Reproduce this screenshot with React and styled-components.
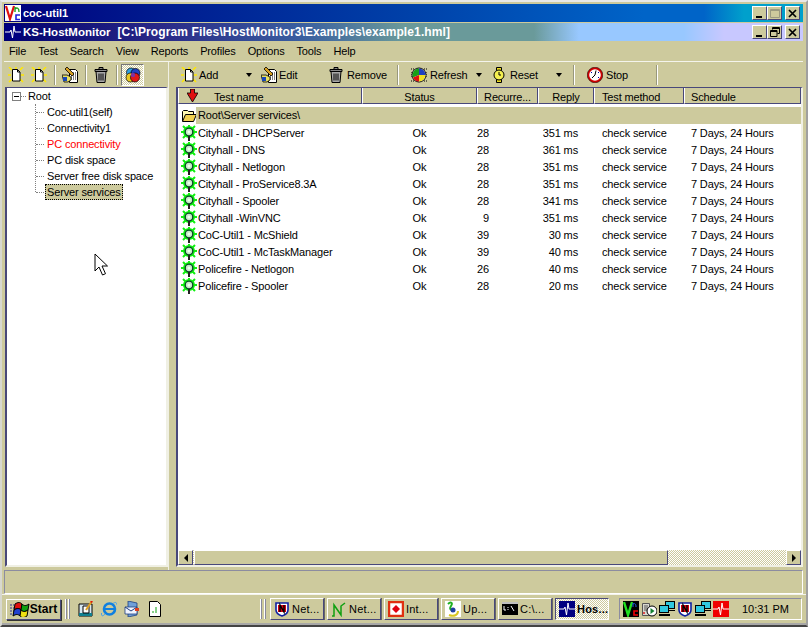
import React from "react";
import styled, { createGlobalStyle, css } from "styled-components";

const BG = "#cdca9d";
const DK = "#48487a";
const LT = "#fff";
const raised = css`
  border-top: 1px solid ${LT};
  border-left: 1px solid ${LT};
  border-right: 1px solid ${DK};
  border-bottom: 1px solid ${DK};
`;
const dither = `repeating-conic-gradient(${BG} 0 25%, #fff 0 50%) 0 0 / 2px 2px`;

const Global = createGlobalStyle`
  html, body { margin: 0; padding: 0; background: ${BG}; }
  body { font: 11px "Liberation Sans", Arial, sans-serif; color: #000; letter-spacing: -.15px; }
  #root { width: 808px; height: 627px; overflow: hidden; }
`;

const Screen = styled.div`
  width: 808px; height: 627px; box-sizing: border-box; display: flex; flex-direction: column;
  border-top: 2px solid #e8e8e8; border-left: 2px solid #d8d8d0; border-right: 2px solid #a0a0a0; border-bottom: 2px solid #444;
  padding: 2px 3px 0 2px; background: ${BG}; overflow: hidden;
`;
const TitleBar = styled.div`
  height: 18px; flex: none; display: flex; align-items: center; padding: 0 3px 0 1px;
  background: ${p => p.$bg}; color: #fff; font: bold ${p => p.$fs}px "Liberation Sans", Arial, sans-serif;
  letter-spacing: 0; gap: 2px; margin-bottom: ${p => p.$mb || 0}px; white-space: pre;
`;
const TitleName = styled.span`font-size: 11.5px; margin-right: 5px;`;
const TitlePath = styled.span`letter-spacing: .11px;`;
const Spacer = styled.div`flex: 1;`;
const WinButtons = styled.div`display: flex; align-items: center;`;
const WinBtn = styled.div`
  width: 15px; height: 14px; box-sizing: border-box; background: ${BG}; ${raised}; margin-left: ${p => p.$gap || 0}px;
  display: flex; align-items: center; justify-content: center; color: ${p => p.$off ? "#9a9a80" : "#000"};
`;
const MenuBar = styled.div`
  height: 21px; flex: none; box-sizing: border-box; display: flex; align-items: center; padding-left: 5px; gap: 12px;
  border-bottom: 1px solid #f4f4ec;
`;
const Main = styled.div`height: 508px; flex: none; display: flex;`;
const LeftPane = styled.div`width: 165px; flex: none; display: flex; flex-direction: column; border-right: 1px solid #f0f0e4; box-sizing: border-box;`;
const RightPane = styled.div`flex: 1; margin-left: 6px; min-width: 0; display: flex; flex-direction: column;`;
const Toolbar = styled.div`
  height: 25px; flex: none; display: flex; align-items: center; box-sizing: border-box; padding-left: ${p => p.$pl || 0}px;
`;
const Tool = styled.div`
  width: ${p => p.$w}px; flex: none; display: flex; align-items: center; height: 22px; gap: ${p => p.$gap ?? 2}px;
  padding-left: ${p => p.$pl || 0}px; margin-left: ${p => p.$ml || 0}px; box-sizing: border-box;
  ${p => p.$on && css`background: ${dither}; border: 1px solid; border-color: #777 #fff #fff #777; justify-content: center;`}
`;
const Sep = styled.div`
  width: 0; height: 20px; flex: none; border-left: 1px solid #98987c; border-right: 1px solid #fff;
  margin-left: ${p => p.$ml || 0}px;
`;
const Caret = styled.div`
  width: 0; height: 0; flex: none; border: 3px solid transparent; border-top: 4px solid #000; border-bottom: 0;
`;
const TreeBox = styled.div`
  flex: 1; background: #fff; margin: 0 0 3px 1px; border: solid; border-width: 1px 2px 2px 2px; border-color: ${DK} #f0f0e4 #f0f0e4 ${DK};
  padding: 0 0 0 5px; position: relative;
`;
const TreeRoot = styled.div`height: 16px; display: flex; align-items: center; `;
const Expander = styled.div`
  width: 9px; height: 9px; box-sizing: border-box; border: 1px solid #808080; position: relative; flex: none;
  &::after { content: ""; position: absolute; left: 1px; right: 1px; top: 3px; height: 1px; background: #000; }
`;
const Dots = styled.div`width: ${p => p.$w}px; border-top: 1px dotted #808080; flex: none; margin-right: ${p => p.$mr || 0}px;`;
const TreeList = styled.div`margin-left: 23px; border-left: 1px dotted #808080; height: 88px;`;
const TreeItem = styled.div`height: 16px; display: flex; align-items: center; color: ${p => p.$red ? "#f00" : "#000"};`;
const TreeLabel = styled.span`
  padding: 0 2px; line-height: 16px; margin-left: 1px; white-space: nowrap;
  ${p => p.$sel && css`background: ${BG}; outline: 1px dotted #000; outline-offset: -1px;`}
`;
const Cursor = styled.svg`position: absolute; left: 87px; top: 165px;`;
const ListBox = styled.div`
  flex: 1; min-height: 0; background: #fff; margin: 0 0 3px 1px; border: solid; border-width: 1px 2px 2px 2px; border-color: ${DK} #f0f0e4 #f0f0e4 ${DK};
  display: flex; flex-direction: column;
`;
const Header = styled.div`display: flex; height: 16px; flex: none; background: ${BG};`;
const HCell = styled.div`
  width: ${p => p.$w}px; flex: ${p => p.$w ? "none" : 1}; box-sizing: border-box; display: flex; align-items: center;
  justify-content: ${p => p.$center ? "center" : "flex-start"}; padding: 2px 0 0 ${p => p.$pl || 0}px;
  border-right: 1px solid ${DK}; border-bottom: 1px solid ${DK}; border-left: 1px solid #fff;
`;
const SortMark = styled.svg`flex: none; margin: -2px 16px 0 0;`;
const Rows = styled.div`flex: 1; min-height: 0; padding-top: 3px;`;
const GroupRow = styled.div`height: 17px; display: flex; align-items: center; padding-left: 3px; `;
const GroupLabel = styled.div`flex: 1; height: 17px; line-height: 17px; background: ${BG}; padding-left: 2px; margin-left: -1px;`;
const Row = styled.div`display: flex; height: 17px; align-items: center;`;
const Cell = styled.div`
  width: ${p => p.$w}px; flex: none; box-sizing: border-box; white-space: nowrap;
  text-align: ${p => p.$a || "left"}; padding-left: ${p => p.$pl || 0}px;
`;
const NameCell = styled(Cell)`display: flex; align-items: center; gap: 1px; padding-left: 3px;`;
const HScroll = styled.div`height: 15px; flex: none; display: flex; background: ${dither};`;
const ScrollBtn = styled.div`
  width: 15px; flex: none; background: ${BG}; ${raised}; box-sizing: border-box; display: flex; align-items: center; justify-content: center;
`;
const Thumb = styled.div`width: 474px; flex: none; background: ${BG}; ${raised}; box-sizing: border-box; margin-left: 1px;`;
const Arrow = styled.div`
  width: 0; height: 0; border: 4px solid transparent; border-left: 0; border-right: 4px solid #000;
  ${p => p.$right && css`border-right: 0; border-left: 4px solid #000;`}
`;
const StatusBar = styled.div`
  height: 24px; flex: none; box-sizing: border-box; border-top: 1px solid #8c8ca0; border-bottom: 1px solid #fff; border-left: 1px solid #8c8ca0; border-right: 1px solid #fff;
`;
const Taskbar = styled.div`
  flex: 1; display: flex; align-items: center; padding-left: 2px; border-top: 1px solid #f4f4ec; border-bottom: 2px solid #a8a8a8; margin: 0 -3px 0 -2px;
`;
const Start = styled.div`
  width: 55px; height: 21px; flex: none; box-sizing: border-box; ${raised}; display: flex; align-items: center; justify-content: center; gap: 0;
  font: bold 12px "Liberation Sans", Arial, sans-serif; letter-spacing: 0; margin-left: 2px; box-shadow: 1px 1px 0 #333;
`;
const Grip = styled.div`
  width: 2px; height: 20px; flex: none; box-sizing: border-box; border-left: 1px solid #fff; border-right: 1px solid #88889c; margin-left: ${p => p.$ml || 0}px;
`;
const QuickIcons = styled.div`width: 190px; flex: none; display: flex; align-items: center; gap: 7px; padding-left: 8px; box-sizing: border-box;`;
const TaskList = styled.div`display: flex; gap: 3px; margin-left: 4px; flex: none;`;
const TaskBtn = styled.div`
  width: 54px; height: 22px; flex: none; box-sizing: border-box;
  display: flex; align-items: center; gap: 2px; padding-left: 3px; white-space: nowrap; letter-spacing: .2px;
  ${p => p.$on ? css`
    background: ${dither}; font-weight: bold; border: 1px solid; border-color: ${DK} #fff #fff ${DK};
  ` : css`${raised}; box-shadow: 1px 0 0 #666;`}
`;
const Tray = styled.div`
  width: 183px; height: 22px; flex: none; margin-left: 10px; box-sizing: border-box; display: flex; align-items: center; padding-left: 3px;
  border: 1px solid; border-color: #8c8ca0 #fff #fff #8c8ca0; gap: 2px;
`;
const Clock = styled.div`margin-left: auto; margin-right: 12px; white-space: nowrap; letter-spacing: 0;`;

const Ico = ({ s = 16, children }) => <svg width={s} height={s} viewBox="0 0 16 16" style={{ flex: "none" }}>{children}</svg>;

const NewDoc = () => (
  <Ico>
    <path d="M1 0l3 3M15 0l-3 3M0 8h3M13 8h3M8 0v2M1 15l3-3M15 15l-3-3" stroke="#ffe800" strokeWidth="1.5" />
    <path d="M4.5 2.5h5l2.5 2.500v9h-7.500z" fill="#fff" stroke="#000" />
    <path d="M9.500 2.500v2.500h2.500" fill="none" stroke="#000" />
  </Ico>
);
const Edit = () => (
  <Ico>
    <path d="M7.500 2.500h6l2 2v11h-8z" fill="#fff" stroke="#000" />
    <path d="M9 6h5M9 8h5M9 10h5M9 12h5" stroke="#000" strokeDasharray="1 1" />
    <path d="M5 0l7 7-2 2-7-7z" fill="#d8a020" stroke="#000" strokeWidth=".8" />
    <path d="M0 8h5l4 2v3l-3 2H2z" fill="#e8e060" stroke="#000" strokeWidth=".8" />
    <path d="M1 10h4v4H1z" fill="#1848b8" />
  </Ico>
);
const Trash = () => (
  <Ico>
    <path d="M6 .5h4v2H6zM2 2.500h12v2H2z" fill="#888" stroke="#000" />
    <path d="M3 4.500h10l-1 11H4z" fill="#a8a8a8" stroke="#000" />
    <path d="M6 6.500v7M8 6.500v7M10 6.500v7" stroke="#000" />
  </Ico>
);
const Pie = ({ dots }) => (
  <Ico>
    {dots && <path d="M0 2h3M13 2h3M0 14h3M13 14h3M1 5v6M15 5v6" stroke="#000" strokeDasharray="1 1" />}
    <circle cx="8" cy="8" r="7" fill="#fff" stroke="#000" />
    <path d="M8 8V1.500A6.500 6.500 0 0 0 2 10.500z" fill="#18a018" />
    <path d="M8 8V1.500A6.500 6.500 0 0 1 14.500 8z" fill="#2040c0" />
    <path d="M8 8H14.500A6.500 6.500 0 0 1 8 14.500z" fill="#f0e020" />
    <path d="M8 8L2 10.500A6.500 6.500 0 0 0 8 14.500z" fill="#e01010" />
  </Ico>
);
const Globes = () => (
  <Ico>
    <circle cx="6" cy="5.500" r="4.500" fill="#30a0e0" stroke="#000" strokeWidth=".7" />
    <circle cx="10.500" cy="6" r="4.500" fill="#2040c0" stroke="#000" strokeWidth=".7" />
    <circle cx="5.500" cy="10.500" r="4.500" fill="#e8c820" stroke="#000" strokeWidth=".7" />
    <circle cx="10" cy="10.500" r="4.500" fill="#e01818" stroke="#000" strokeWidth=".7" />
    <circle cx="8" cy="8" r="2.200" fill="#8030a0" />
  </Ico>
);
const Watch = () => (
  <Ico>
    <path d="M5.500 .5h5v3h-5zM5.500 12.500h5v3h-5z" fill="#f0e020" stroke="#000" />
    <circle cx="8" cy="8" r="5" fill="#f4f050" stroke="#000" />
    <path d="M8 5v3h2" stroke="#000" fill="none" />
  </Ico>
);
const Stopwatch = () => (
  <Ico>
    <circle cx="8" cy="8" r="6.800" fill="#fff" stroke="#d00000" strokeWidth="2" />
    <circle cx="8" cy="8" r="7.800" fill="none" stroke="#000" strokeWidth=".5" />
    <path d="M9 3.500L8 8l-3 3" stroke="#000" fill="none" />
    <path d="M12 5l-1 1M12 11l-1-1M4 5l1 1" stroke="#0000a0" />
  </Ico>
);
const Bulb = () => (
  <Ico>
    <path d="M8 0v3M0 7h3M13 7h3M2 1l3 3M14 1l-3 3M2 13l3-3M14 13l-3-3" stroke="#10f010" strokeWidth="2" />
    <circle cx="8" cy="7" r="6" fill="#10f010" />
    <circle cx="8" cy="7" r="3.800" fill="#c8e8c8" stroke="#084828" strokeWidth="1.300" />
    <circle cx="8" cy="7" r="1.500" fill="#f0fff0" />
    <path d="M7 11h2v5H7z" fill="#222" />
  </Ico>
);
const Folder = () => (
  <Ico>
    <path d="M1.500 13V3.500l1-1h4l1 1h5v3" fill="#fff8b0" stroke="#000" />
    <path d="M1.500 13.500l3-7h11l-3 7z" fill="#f0d050" stroke="#000" />
  </Ico>
);
const Pulse = ({ s = 16, bg = "#000080", fg = "#fff" }) => (
  <Ico s={s}><rect width="16" height="16" fill={bg} /><path d="M0 8h5l1-2 1.500 8L9 2l1 6h6" fill="none" stroke={fg} /></Ico>
);
const GreenLine = () => (
  <Ico><path d="M1 15h2V4l7 10V5l4-3" fill="none" stroke="#10a010" strokeWidth="1.500" /></Ico>
);
const Alarm = () => (
  <Ico><rect x="1" y="1" width="14" height="14" fill="#fff" stroke="#e03010" strokeWidth="2.500" /><path d="M8 4l4 4-4 4-4-4z" fill="#e00010" /></Ico>
);
const Swirl = () => (
  <Ico>
    <rect width="16" height="16" fill="#fff" />
    <path d="M3 3C6 0 8 2 6 5s0 5 4 4" fill="none" stroke="#20b020" strokeWidth="2" />
    <circle cx="8" cy="9" r="2.500" fill="#2040a0" />
    <path d="M4 14c5 2 9 0 9-4" fill="none" stroke="#d8c820" strokeWidth="2" />
  </Ico>
);
const Cmd = () => (
  <Ico>
    <rect y="1" width="16" height="13" fill="#000" />
    <rect y="1" width="16" height="2" fill="#c0c0c0" />
    <path d="M2 5v4h2M6 6v1M6 8v1M9 5l3 5" fill="none" stroke="#fff" />
  </Ico>
);
const Flag = () => (
  <svg width="20" height="16" viewBox="0 0 20 16" style={{ flex: "none" }}>
    <path d="M0 4h4M0 7h4M0 10h4M0 13h4" stroke="#303090" strokeDasharray="2 1" />
    <path d="M5 3c3-2 5-2 7 0l-1 6c-2-2-4-2-7 0z" fill="#e01010" stroke="#000" />
    <path d="M12 3c2 2 4 2 7 0l-1 6c-3 2-5 2-7 0z" fill="#10a010" stroke="#000" />
    <path d="M4 9c3-2 5-2 7 0l-1 6c-2-2-4-2-7 0z" fill="#2040d0" stroke="#000" />
    <path d="M11 9c2 2 4 2 7 0l-1 6c-3 2-5 2-7 0z" fill="#f0e010" stroke="#000" />
  </svg>
);
const Notepad = () => (
  <Ico>
    <path d="M1 3h13v12H1z" fill="#d8e8f0" stroke="#000" />
    <path d="M1 12h13v3H1z" fill="#108090" />
    <path d="M5 5h6v7H5z" fill="#fff" stroke="#000" />
    <path d="M14 0L8 9" stroke="#e0a020" strokeWidth="2" />
    <path d="M14 0l-1 1.500" stroke="#e01010" strokeWidth="2" />
  </Ico>
);
const IE = () => (
  <Ico>
    <circle cx="8.500" cy="8" r="5.500" fill="none" stroke="#1080e0" strokeWidth="2.600" />
    <path d="M3.500 8h11" stroke="#1080e0" strokeWidth="2" />
    <path d="M12 2.500c2-1.500 4-1.500 3.500 1M4 13c-2 2.500-4 2.500-3.500-1" fill="none" stroke="#40a0f0" />
  </Ico>
);
const Mail = () => (
  <Ico>
    <path d="M4 0l9 2v12l-9 2z" fill="#70a0d8" stroke="#204080" strokeWidth=".8" />
    <path d="M1 6h12v7H1z" fill="#f0f4ff" stroke="#204080" strokeWidth=".8" />
    <path d="M1 6l6 4 6-4" fill="none" stroke="#204080" />
    <path d="M11 7h4v3h-4z" fill="#e04020" />
  </Ico>
);
const PaperBars = () => (
  <Ico>
    <path d="M2.500 .5h8l3 3v12h-11z" fill="#fff" stroke="#000" />
    <path d="M6 10v2M9 6v6" stroke="#10a010" />
  </Ico>
);
const ServerPlay = () => (
  <Ico>
    <path d="M1.500 2.500h7v12h-7z" fill="#d8d8d0" stroke="#555" />
    <path d="M3 5h4M3 7h4M3 9h4" stroke="#555" />
    <circle cx="3" cy="12" r="1" fill="#e02020" />
    <circle cx="11" cy="10" r="5" fill="#fff" stroke="#000" />
    <path d="M9.500 7l4 3-4 3z" fill="#108030" />
  </Ico>
);
const VC = () => (
  <svg width="16" height="16" viewBox="0 0 16 16" style={{ flex: "none" }}>
    <rect width="16" height="16" fill="#fff" />
    <path d="M1 1l4 13 4-13" fill="none" stroke="#e01010" strokeWidth="2.200" />
    <path d="M10 2v5M10 4c2-2 4-1 4 3" fill="none" stroke="#20a020" strokeWidth="1.400" />
    <path d="M15 10h-4v4.500h4" fill="none" stroke="#2020e0" strokeWidth="1.600" />
  </svg>
);
const VCDark = () => (
  <svg width="16" height="16" viewBox="0 0 16 16" style={{ flex: "none" }}>
    <rect width="16" height="16" fill="#000" />
    <path d="M1 1l4 13 4-13" fill="none" stroke="#20e020" strokeWidth="2.400" />
    <path d="M15 10h-4v4h4" fill="none" stroke="#f00000" strokeWidth="1.600" />
    <path d="M10 2v4M10 3c2-1 3 0 3 3" stroke="#2060e0" fill="none" />
  </svg>
);
const Shield = () => (
  <Ico>
    <path d="M2 2h12v7c0 3-3 5-6 6-3-1-6-3-6-6z" fill="#fff" stroke="#1020a0" strokeWidth="1.600" />
    <path d="M4 4h8v7H4z" fill="#d80010" />
    <path d="M6 11V4l4 7V4" fill="none" stroke="#000" strokeWidth="1.400" />
  </Ico>
);
const Net = () => (
  <Ico>
    <rect x="6.500" y=".5" width="9" height="7" fill="#30c8e0" stroke="#000" />
    <rect x=".5" y="4.500" width="9" height="7" fill="#30c8e0" stroke="#000" />
    <path d="M0 14h11" stroke="#000" strokeWidth="2" />
    <path d="M10 9.500h6" stroke="#000" />
  </Ico>
);
const Min = () => <svg width="9" height="9" viewBox="0 0 9 9"><path d="M1 7h6v2H1z" fill="currentColor" /></svg>;
const Max = () => <svg width="10" height="9" viewBox="0 0 10 9"><path d="M.5.5h9v8h-9zM1 1.500h8" fill="none" stroke="currentColor" /></svg>;
const Restore = () => (
  <svg width="10" height="10" viewBox="0 0 10 10"><path d="M2.500 2.500v-2h7v6h-2M3 1.500h6" fill="none" stroke="currentColor" /><path d="M.5 3.500h6.500v6h-6.500zM1 4.500h6" fill="none" stroke="currentColor" /></svg>
);
const Close = () => <svg width="9" height="9" viewBox="0 0 9 9"><path d="M1 1l7 7M8 1l-7 7" stroke="currentColor" strokeWidth="1.700" /></svg>;

const tests = [
  ["Cityhall - DHCPServer", "Ok", "28", "351 ms"],
  ["Cityhall - DNS", "Ok", "28", "361 ms"],
  ["Cityhall - Netlogon", "Ok", "28", "351 ms"],
  ["Cityhall - ProService8.3A", "Ok", "28", "351 ms"],
  ["Cityhall - Spooler", "Ok", "28", "341 ms"],
  ["Cityhall -WinVNC", "Ok", "9", "351 ms"],
  ["CoC-Util1 - McShield", "Ok", "39", "30 ms"],
  ["CoC-Util1 - McTaskManager", "Ok", "39", "40 ms"],
  ["Policefire - Netlogon", "Ok", "26", "40 ms"],
  ["Policefire - Spooler", "Ok", "28", "20 ms"],
];
const menu = ["File", "Test", "Search", "View", "Reports", "Profiles", "Options", "Tools", "Help"];
const tree = ["Coc-util1(self)", "Connectivity1", "PC connectivity", "PC disk space", "Server free disk space"];

const title1Bg = "linear-gradient(90deg,#00007c 0,#001c90 160px,#0040a8 400px,#0064c8 640px,#0064c8 700px,#00a0cc 740px)";
const title2Bg = "linear-gradient(90deg,#00006e 0,#2a2a88 160px,#3a60a0 300px,#6a9a9a 400px,#6a9a9a 530px,#98c8ff 575px,#98c8ff 680px,#c8c8ff 720px)";

export default function App() {
  return (
    <Screen>
      <Global />
      <TitleBar $fs={11} $mb={1} $bg={title1Bg}>
        <VC />coc-util1<Spacer />
        <WinButtons>
          <WinBtn><Min /></WinBtn><WinBtn $off><Max /></WinBtn><WinBtn $gap={3}><Close /></WinBtn>
        </WinButtons>
      </TitleBar>
      <TitleBar $fs={12} $bg={title2Bg}>
        <Pulse /><TitleName>KS-HostMonitor</TitleName><TitlePath>[C:\Program Files\HostMonitor3\Examples\example1.hml]</TitlePath><Spacer />
        <WinButtons>
          <WinBtn><Min /></WinBtn><WinBtn><Restore /></WinBtn><WinBtn $gap={3}><Close /></WinBtn>
        </WinButtons>
      </TitleBar>
      <MenuBar>{menu.map(m => <span key={m}>{m}</span>)}</MenuBar>
      <Main>
        <LeftPane>
          <Toolbar $pl={4}>
            <Tool $w={23}><NewDoc /></Tool>
            <Tool $w={23}><NewDoc /></Tool>
            <Sep />
            <Tool $w={29} $pl={6}><Edit /></Tool>
            <Sep />
            <Tool $w={29} $pl={6}><Trash /></Tool>
            <Sep />
            <Tool $w={23} $ml={3} $on><Globes /></Tool>
          </Toolbar>
          <TreeBox>
            <TreeRoot><Expander /><Dots $w={5} $mr={2} /><span>Root</span></TreeRoot>
            <TreeList>
              {tree.map((t, i) => (
                <TreeItem key={t} $red={i === 2}><Dots $w={8} /><TreeLabel>{t}</TreeLabel></TreeItem>
              ))}
              <TreeItem><Dots $w={8} /><TreeLabel $sel>Server services</TreeLabel></TreeItem>
            </TreeList>
            <Cursor width="14" height="23" viewBox="0 0 14 23"><path d="M1 1v17l4-4 3.500 8 3-1.300-3.500-7.700h5.500z" fill="#fff" stroke="#000" /></Cursor>
          </TreeBox>
        </LeftPane>
        <RightPane>
          <Toolbar $pl={6}>
            <Tool $w={65}><NewDoc />Add</Tool>
            <Caret />
            <Tool $w={67} $ml={9}><Edit />Edit</Tool>
            <Tool $w={68} $gap={3}><Trash />Remove</Tool>
            <Sep $ml={1} />
            <Tool $w={65} $ml={12} $gap={3}><Pie dots />Refresh</Tool>
            <Caret />
            <Tool $w={65} $ml={9} $gap={3}><Watch />Reset</Tool>
            <Caret />
            <Sep $ml={11} />
            <Tool $w={69} $ml={12} $gap={3}><Stopwatch />Stop</Tool>
            <Sep />
          </Toolbar>
          <ListBox>
            <Header>
              <HCell $w={184} $pl={8}>
                <SortMark width="11" height="14" viewBox="0 0 11 14">
                  <path d="M3.500 0h4v4h3.500L5.500 13 0 4h3.500z" fill="#e01010" stroke="#000" strokeWidth=".8" />
                </SortMark>
                Test name
              </HCell>
              <HCell $w={115} $center>Status</HCell>
              <HCell $w={61} $center>Recurre...</HCell>
              <HCell $w={56} $center>Reply</HCell>
              <HCell $w={90} $pl={7}>Test method</HCell>
              <HCell $pl={6}>Schedule</HCell>
            </Header>
            <Rows>
              <GroupRow><Folder /><GroupLabel>Root\Server services\</GroupLabel></GroupRow>
              {tests.map(t => (
                <Row key={t[0]}>
                  <NameCell $w={184}><Bulb />{t[0]}</NameCell>
                  <Cell $w={115} $a="center">{t[1]}</Cell>
                  <Cell $w={12} $a="right">{t[2]}</Cell>
                  <Cell $w={89} $a="right">{t[3]}</Cell>
                  <Cell $w={106} $pl={24}>check service</Cell>
                  <Cell $w={110} $pl={7}>7 Days, 24 Hours</Cell>
                </Row>
              ))}
            </Rows>
            <HScroll>
              <ScrollBtn><Arrow /></ScrollBtn>
              <Thumb />
              <Spacer />
              <ScrollBtn><Arrow $right /></ScrollBtn>
            </HScroll>
          </ListBox>
        </RightPane>
      </Main>
      <StatusBar />
      <Taskbar>
        <Start><Flag />Start</Start>
        <Grip $ml={4} />
        <Grip $ml={1} />
        <QuickIcons><Notepad /><IE /><Mail /><PaperBars /></QuickIcons>
        <Grip />
        <Grip $ml={2} />
        <TaskList>
          <TaskBtn><Shield />Net...</TaskBtn>
          <TaskBtn><GreenLine />Net...</TaskBtn>
          <TaskBtn><Alarm />Int...</TaskBtn>
          <TaskBtn><Swirl />Up...</TaskBtn>
          <TaskBtn><Cmd />C:\...</TaskBtn>
          <TaskBtn $on><Pulse />Hos...</TaskBtn>
        </TaskList>
        <Tray><VCDark /><ServerPlay /><Net /><Shield /><Net /><Pulse bg="#f00000" /><Clock>10:31 PM</Clock></Tray>
      </Taskbar>
    </Screen>
  );
}
